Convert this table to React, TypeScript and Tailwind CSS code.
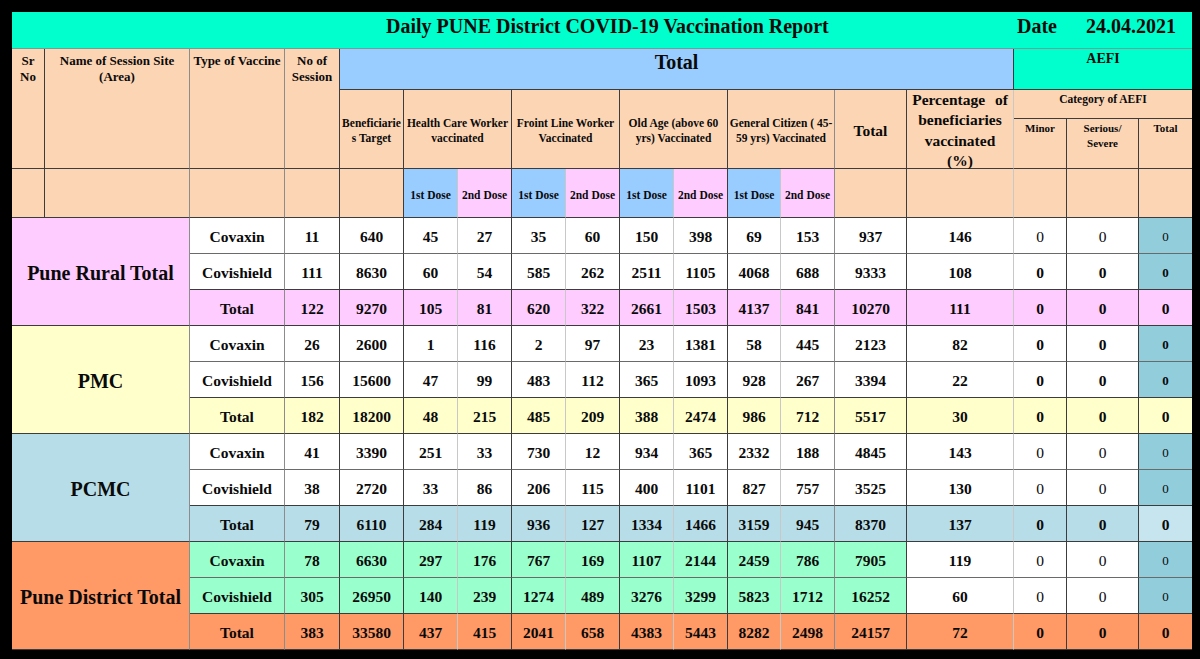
import React from "react";

const DARK_R = "border-r border-r-[#3c3c3c]";
const MID_R = "border-r border-r-[#8c8c8c]";
const LIGHT_R = "border-r border-r-[#c8c8c8]";
const DARK_B = "border-b border-b-[#3c3c3c]";
const MID_B = "border-b border-b-[#6a6a6a]";

const PEACH = "bg-[#fcd5b4]";

// right border for the 15 value columns: NoS, Benef, HCW1, HCW2, FLW1, FLW2, Old1, Old2, Gen1, Gen2, Total, Pct, Minor, Serious, AEFI Total
const valRight = [
  DARK_R,
  DARK_R,
  LIGHT_R,
  DARK_R,
  LIGHT_R,
  DARK_R,
  LIGHT_R,
  DARK_R,
  LIGHT_R,
  MID_R,
  DARK_R,
  LIGHT_R,
  DARK_R,
  DARK_R,
  "",
];

type Row = { type: string; v: (number | string)[]; aefiBold: boolean };
type Group = { name: string; bg: string; lastBg: string; green: boolean; rows: Row[] };

const groups: Group[] = [
  {
    name: "Pune Rural Total",
    bg: "bg-[#ffccff]",
    lastBg: "bg-[#ffccff]",
    green: false,
    rows: [
      { type: "Covaxin", v: [11, 640, 45, 27, 35, 60, 150, 398, 69, 153, 937, 146, 0, 0, 0], aefiBold: false },
      { type: "Covishield", v: [111, 8630, 60, 54, 585, 262, 2511, 1105, 4068, 688, 9333, 108, 0, 0, 0], aefiBold: true },
      { type: "Total", v: [122, 9270, 105, 81, 620, 322, 2661, 1503, 4137, 841, 10270, 111, 0, 0, 0], aefiBold: true },
    ],
  },
  {
    name: "PMC",
    bg: "bg-[#ffffcc]",
    lastBg: "bg-[#ffffcc]",
    green: false,
    rows: [
      { type: "Covaxin", v: [26, 2600, 1, 116, 2, 97, 23, 1381, 58, 445, 2123, 82, 0, 0, 0], aefiBold: true },
      { type: "Covishield", v: [156, 15600, 47, 99, 483, 112, 365, 1093, 928, 267, 3394, 22, 0, 0, 0], aefiBold: true },
      { type: "Total", v: [182, 18200, 48, 215, 485, 209, 388, 2474, 986, 712, 5517, 30, 0, 0, 0], aefiBold: true },
    ],
  },
  {
    name: "PCMC",
    bg: "bg-[#b7dee8]",
    lastBg: "bg-[#c6e5ee]",
    green: false,
    rows: [
      { type: "Covaxin", v: [41, 3390, 251, 33, 730, 12, 934, 365, 2332, 188, 4845, 143, 0, 0, 0], aefiBold: false },
      { type: "Covishield", v: [38, 2720, 33, 86, 206, 115, 400, 1101, 827, 757, 3525, 130, 0, 0, 0], aefiBold: false },
      { type: "Total", v: [79, 6110, 284, 119, 936, 127, 1334, 1466, 3159, 945, 8370, 137, 0, 0, 0], aefiBold: true },
    ],
  },
  {
    name: "Pune District Total",
    bg: "bg-[#ff9966]",
    lastBg: "bg-[#ff9966]",
    green: true,
    rows: [
      { type: "Covaxin", v: [78, 6630, 297, 176, 767, 169, 1107, 2144, 2459, 786, 7905, 119, 0, 0, 0], aefiBold: false },
      { type: "Covishield", v: [305, 26950, 140, 239, 1274, 489, 3276, 3299, 5823, 1712, 16252, 60, 0, 0, 0], aefiBold: false },
      { type: "Total", v: [383, 33580, 437, 415, 2041, 658, 4383, 5443, 8282, 2498, 24157, 72, 0, 0, 0], aefiBold: true },
    ],
  },
];

function rowBottom(ri: number) {
  return ri === 0 ? MID_B : DARK_B;
}

function cellBg(g: Group, ri: number, ci: number) {
  if (ri === 2) return ci === 14 ? g.lastBg : g.bg;
  if (ci === 14) return "bg-[#92cddc]";
  if (g.green && ci <= 10) return "bg-[#99ffcc]";
  return "bg-white";
}

function cellFont(r: Row, ri: number, ci: number) {
  if (ci >= 12) {
    const w = r.aefiBold ? "font-bold" : "font-normal";
    if (ci === 14 && ri !== 2) return w + " text-[13px]";
    return w + " text-[15.5px]";
  }
  return "font-bold text-[15.5px]";
}

const doses = [
  { label: "1st Dose", cls: "bg-[#99ccff] " + LIGHT_R },
  { label: "2nd Dose", cls: "bg-[#ffccff] " + DARK_R },
  { label: "1st Dose", cls: "bg-[#99ccff] " + LIGHT_R },
  { label: "2nd Dose", cls: "bg-[#ffccff] " + DARK_R },
  { label: "1st Dose", cls: "bg-[#99ccff] " + LIGHT_R },
  { label: "2nd Dose", cls: "bg-[#ffccff] " + DARK_R },
  { label: "1st Dose", cls: "bg-[#99ccff] " + LIGHT_R },
  { label: "2nd Dose", cls: "bg-[#ffccff] " + MID_R },
];

export default function App() {
  return (
    <div className="w-[1200px] h-[659px] bg-black overflow-hidden pt-[12px] pl-[12px] text-[#0a0a0a] [font-family:'Liberation_Serif','Times_New_Roman',serif]">
      <div className="grid w-[1180px] grid-cols-[33px_145px_95px_55px_64px_54px_54px_54px_54px_54px_54px_53px_54px_72px_107px_53px_72px_53px] grid-rows-[37px_41px_29px_50px_49px_repeat(12,36px)] font-bold">
        {/* Title row */}
        <div className="col-span-18 bg-[#00ffcc] border-b border-b-[#6f9f95] flex items-start pt-[2px] text-[20px] leading-[24px] font-bold whitespace-nowrap">
          <span className="shrink-0 w-[1005px] pl-[374px]">Daily PUNE District COVID-19 Vaccination Report</span>
          <span className="shrink-0 w-[69px]">Date</span>
          <span className="shrink-0">24.04.2021</span>
        </div>

        {/* Header row A */}
        <div className={`row-span-3 ${PEACH} ${DARK_R} ${DARK_B} text-center text-[13px] leading-[16px] pt-[4px]`}>
          Sr
          <br />
          No
        </div>
        <div className={`row-span-3 ${PEACH} ${MID_R} ${DARK_B} text-center text-[13px] leading-[16px] pt-[4px]`}>
          Name of Session Site
          <br />
          (Area)
        </div>
        <div className={`row-span-3 ${PEACH} ${MID_R} ${DARK_B} text-center text-[13px] leading-[16px] pt-[4px] whitespace-nowrap`}>
          Type of Vaccine
        </div>
        <div className={`row-span-3 ${PEACH} ${DARK_R} ${DARK_B} text-center text-[13px] leading-[16px] pt-[4px]`}>
          No of
          <br />
          Session
        </div>
        <div className={`col-span-11 bg-[#99ccff] ${DARK_R} ${DARK_B} text-center text-[20px] leading-[24px] pt-[1px]`}>
          Total
        </div>
        <div className={`col-span-3 bg-[#00ffcc] ${DARK_B} text-center text-[14px] leading-[18px] pt-[1px]`}>
          AEFI
        </div>

        {/* Header row B */}
        <div className={`row-span-2 ${PEACH} ${DARK_R} ${DARK_B} flex items-center justify-center text-center text-[11.5px] leading-[15px] pt-[3px]`}>
          <span>
            Beneficiarie
            <br />s Target
          </span>
        </div>
        <div className={`col-span-2 row-span-2 ${PEACH} ${DARK_R} ${DARK_B} flex items-center justify-center text-center text-[11.5px] leading-[15px] pt-[3px] whitespace-nowrap`}>
          <span>
            Health Care Worker
            <br />
            vaccinated
          </span>
        </div>
        <div className={`col-span-2 row-span-2 ${PEACH} ${DARK_R} ${DARK_B} flex items-center justify-center text-center text-[11.5px] leading-[15px] pt-[3px] whitespace-nowrap`}>
          <span>
            Froint Line Worker
            <br />
            Vaccinated
          </span>
        </div>
        <div className={`col-span-2 row-span-2 ${PEACH} ${DARK_R} ${DARK_B} flex items-center justify-center text-center text-[11.5px] leading-[15px] pt-[3px] whitespace-nowrap`}>
          <span>
            Old Age (above 60
            <br />
            yrs) Vaccinated
          </span>
        </div>
        <div className={`col-span-2 row-span-2 ${PEACH} ${MID_R} ${DARK_B} flex items-center justify-center text-center text-[11.5px] leading-[15px] pt-[3px] whitespace-nowrap`}>
          <span>
            General Citizen ( 45-
            <br />
            59 yrs) Vaccinated
          </span>
        </div>
        <div className={`row-span-2 ${PEACH} ${DARK_R} ${DARK_B} flex items-center justify-center text-[15.5px] pt-[3px]`}>
          Total
        </div>
        <div className={`row-span-2 ${PEACH} ${LIGHT_R} ${DARK_B} flex items-center justify-center text-center text-[15.5px] leading-[20.5px] pt-[3px] whitespace-nowrap`}>
          <span>
            <span className="[word-spacing:6px]">Percentage of</span>
            <br />
            beneficiaries
            <br />
            vaccinated
            <br />
            (%)
          </span>
        </div>
        <div className={`col-span-3 ${PEACH} ${DARK_B} text-center text-[11.5px] leading-[15px] pt-[2px]`}>
          Category of AEFI
        </div>
        <div className={`${PEACH} ${DARK_R} ${DARK_B} text-center text-[11px] leading-[15px] pt-[2px]`}>Minor</div>
        <div className={`${PEACH} ${DARK_R} ${DARK_B} text-center text-[11px] leading-[15px] pt-[2px]`}>
          Serious/
          <br />
          Severe
        </div>
        <div className={`${PEACH} ${DARK_B} text-center text-[11px] leading-[15px] pt-[2px]`}>Total</div>

        {/* Dose row */}
        <div className={`${PEACH} ${DARK_R} ${DARK_B}`} />
        <div className={`${PEACH} ${MID_R} ${DARK_B}`} />
        <div className={`${PEACH} ${MID_R} ${DARK_B}`} />
        <div className={`${PEACH} ${DARK_R} ${DARK_B}`} />
        <div className={`${PEACH} ${DARK_R} ${DARK_B}`} />
        {doses.map((d, i) => (
          <div
            key={i}
            className={`${d.cls} ${DARK_B} flex items-center justify-center text-[11.5px] pt-[5px] whitespace-nowrap`}
          >
            {d.label}
          </div>
        ))}
        <div className={`${PEACH} ${DARK_R} ${DARK_B}`} />
        <div className={`${PEACH} ${LIGHT_R} ${DARK_B}`} />
        <div className={`${PEACH} ${DARK_R} ${DARK_B}`} />
        <div className={`${PEACH} ${DARK_R} ${DARK_B}`} />
        <div className={`${PEACH} ${DARK_B}`} />

        {/* Data */}
        {groups.map((g, gi) => (
          <React.Fragment key={gi}>
            {g.rows.map((r, ri) => (
              <React.Fragment key={ri}>
                {ri === 0 && (
                  <div
                    className={`col-span-2 row-span-3 ${g.bg} ${MID_R} ${DARK_B} flex items-center justify-center text-[20px] pt-[3px] whitespace-nowrap`}
                  >
                    {g.name}
                  </div>
                )}
                <div
                  className={`${
                    ri === 2 ? g.bg : g.green ? "bg-[#99ffcc]" : "bg-white"
                  } ${MID_R} ${rowBottom(ri)} flex items-center justify-center text-[15.5px] pt-[3px]`}
                >
                  {r.type}
                </div>
                {r.v.map((val, ci) => (
                  <div
                    key={ci}
                    className={`${cellBg(g, ri, ci)} ${valRight[ci]} ${rowBottom(ri)} ${cellFont(
                      r,
                      ri,
                      ci
                    )} flex items-center justify-center pt-[3px]`}
                  >
                    {val}
                  </div>
                ))}
              </React.Fragment>
            ))}
          </React.Fragment>
        ))}
      </div>
    </div>
  );
}
